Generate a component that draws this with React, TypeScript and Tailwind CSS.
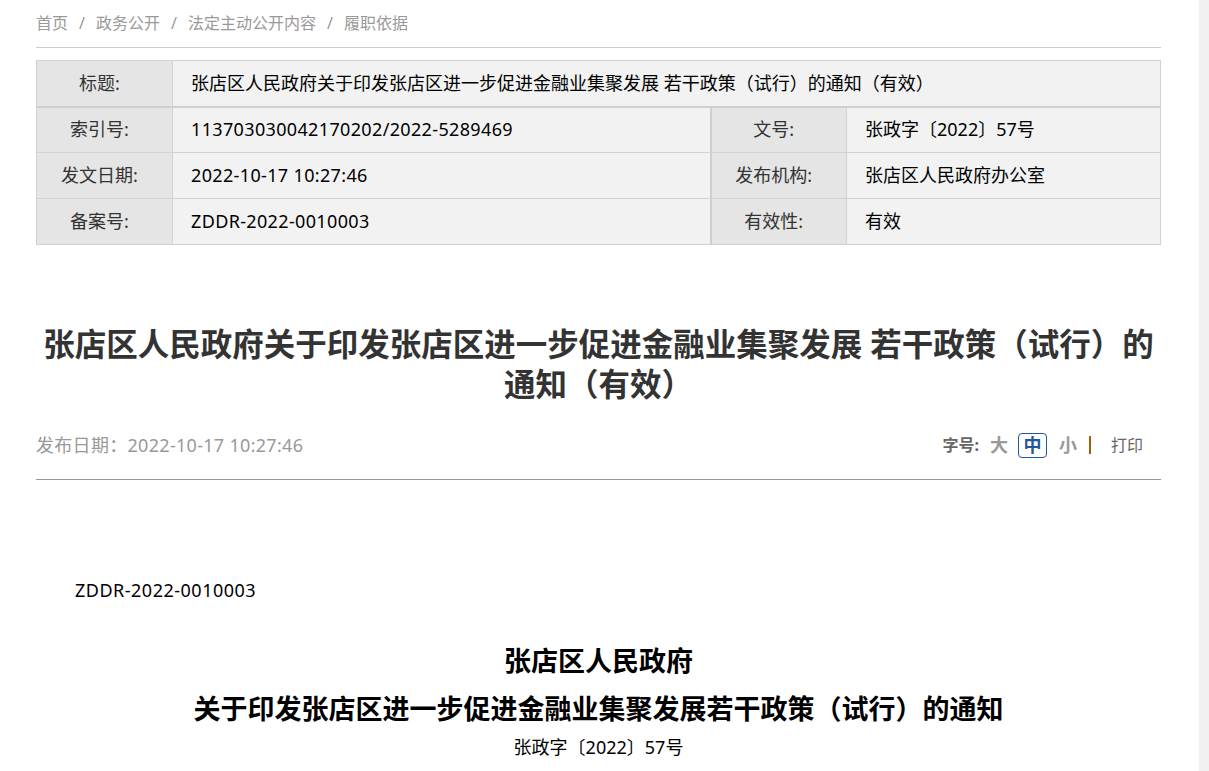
import React from 'react';

const font = "font-['Noto_Sans','Noto_Sans_CJK_SC',sans-serif]";

function Label({ children, last }: { children: React.ReactNode; last?: boolean }) {
  return (
    <td className={`w-[136px] h-[46px] p-0 pr-[10px] border border-[#d2d2d2] bg-[#e5e5e5] text-center text-[18px] text-[#333] ${last ? 'border-l-[2px] border-l-[#cfcfcf]' : ''}`}>
      {children}
    </td>
  );
}

function Value({ children, span, num }: { children: React.ReactNode; span?: number; num?: boolean }) {
  return (
    <td colSpan={span} className={`h-[46px] p-0 pl-[18px] border border-[#d2d2d2] bg-[#f2f2f2] text-left text-[18px] text-black ${num ? 'tracking-[0.35px]' : ''}`}>
      {children}
    </td>
  );
}

export default function App() {
  const crumbs = ['首页', '政务公开', '法定主动公开内容', '履职依据'];

  return (
    <div className={`flex min-h-screen bg-white ${font}`}>
      <div className="flex-1">
        <div className="ml-[36px] w-[1125px]">
          {/* breadcrumb */}
          <div className="pt-[11px] pb-[12px] border-b border-[#cccccc] text-[16px] leading-[24px] text-[#999]">
            {crumbs.map((c, i) => (
              <span key={c}>
                {i > 0 && <span className="mx-[11px]">/</span>}
                {c}
              </span>
            ))}
          </div>

          {/* meta table */}
          <table className="mt-[12px] w-full border-collapse table-fixed">
            <colgroup>
              <col className="w-[136px]" />
              <col className="w-[538px]" />
              <col className="w-[136px]" />
              <col />
            </colgroup>
            <tbody>
              <tr className="border-b-[2px] border-b-[#cfcfcf]">
                <Label>标题:</Label>
                <Value span={3}>张店区人民政府关于印发张店区进一步促进金融业集聚发展 若干政策（试行）的通知（有效）</Value>
              </tr>
              <tr>
                <Label>索引号:</Label>
                <Value num>113703030042170202/2022-5289469</Value>
                <Label last>文号:</Label>
                <Value>张政字〔2022〕57号</Value>
              </tr>
              <tr>
                <Label>发文日期:</Label>
                <Value num>2022-10-17 10:27:46</Value>
                <Label last>发布机构:</Label>
                <Value>张店区人民政府办公室</Value>
              </tr>
              <tr>
                <Label>备案号:</Label>
                <Value num>ZDDR-2022-0010003</Value>
                <Label last>有效性:</Label>
                <Value>有效</Value>
              </tr>
            </tbody>
          </table>

          {/* title */}
          <h1 className="mt-[79px] text-center text-[31.5px] leading-[40px] font-bold text-[#333]">
            张店区人民政府关于印发张店区进一步促进金融业集聚发展 若干政策（试行）的通知（有效）
          </h1>

          {/* date + font size */}
          <div className="mt-[29px] pb-[22px] border-b border-[#999] flex items-center justify-between">
            <div className="text-[18px] leading-[24px] text-[#999] tracking-[0.3px]">发布日期：2022-10-17 10:27:46</div>
            <div className="flex items-center pr-[18px] h-[24px]">
              <span className="text-[16px] font-bold text-[#666]">字号:</span>
              <span className="ml-[11px] text-[18px] font-bold text-[#999]">大</span>
              <span className="ml-[10px] w-[29px] h-[25px] flex items-center justify-center rounded-[4px] border border-[#1e56a0] text-[18px] font-bold text-[#1e56a0]">中</span>
              <span className="ml-[12px] text-[18px] font-bold text-[#999]">小</span>
              <span className="ml-[12px] w-[2px] h-[18px] bg-[#a0600a]" />
              <span className="ml-[20px] text-[16px] text-[#666]">打印</span>
            </div>
          </div>

          {/* body */}
          <div className="text-black">
            <p className="mt-[96px] pl-[39px] text-[18px] leading-[28px] tracking-[0.5px]">ZDDR-2022-0010003</p>
            <p className="mt-[33px] text-center text-[27px] leading-[48px] font-bold">张店区人民政府</p>
            <p className="text-center text-[27px] leading-[48px] font-bold">关于印发张店区进一步促进金融业集聚发展若干政策（试行）的通知</p>
            <p className="text-center text-[18px] leading-[28px]">张政字〔2022〕57号</p>
          </div>
        </div>
      </div>
      <div className="w-[10px] bg-[#f1f1f1]" />
    </div>
  );
}
